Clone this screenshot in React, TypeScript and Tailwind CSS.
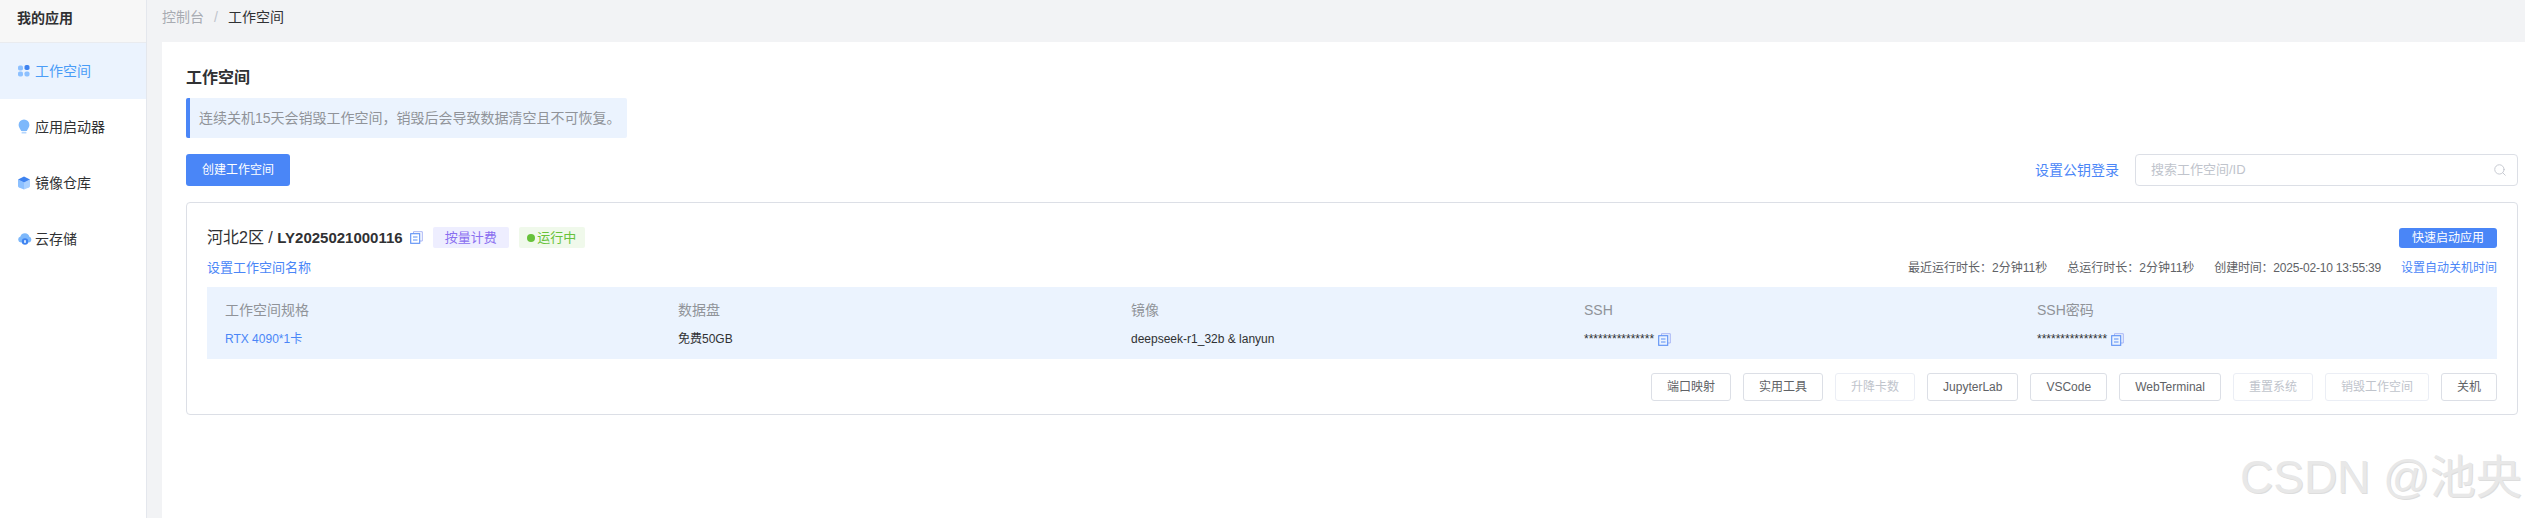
import React from 'react';
import { Search } from 'lucide-react';

const AppsIcon = () => (
  <svg width="14" height="14" viewBox="0 0 14 14" className="shrink-0">
    <rect x="1" y="1.5" width="5" height="5" rx="1.8" fill="#8cc0ff" />
    <rect x="7.5" y="1" width="5" height="5" rx="1.8" fill="#3f83f0" />
    <rect x="1" y="7.5" width="5" height="5" rx="1.8" fill="#8cc0ff" />
    <rect x="7.5" y="7.5" width="5" height="5" rx="1.8" fill="#8cc0ff" />
  </svg>
);

const BulbIcon = () => (
  <svg width="14" height="16" viewBox="0 0 14 16" className="shrink-0">
    <path d="M7 0.5a5.4 5.4 0 0 1 5.4 5.4c0 2.4-1.6 3.6-2.6 6.1H4.2C3.200 9.500 1.600 8.300 1.600 5.900A5.400 5.400 0 0 1 7 0.500z" fill="#7db8fb" />
    <rect x="4.500" y="12.800" width="5" height="1.800" rx="0.900" fill="#b5d6fd" />
  </svg>
);

const BoxIcon = () => (
  <svg width="14" height="14" viewBox="0 0 14 14" className="shrink-0">
    <path d="M1 3.500L7 6.500V13.500L2 11.500Q1 11 1 10z" fill="#8cc0ff" />
    <path d="M13 3.500L7 6.500V13.500L12 11.500Q13 11 13 10z" fill="#a9d0ff" />
    <path d="M7 0.500L13 3.500L7 6.500L1 3.500z" fill="#3f83f0" />
  </svg>
);

const CloudIcon = () => (
  <svg width="16" height="14" viewBox="0 0 16 14" className="shrink-0">
    <path d="M4 10.500a3 3 0 0 1-0.600-5.900A4.700 4.700 0 0 1 12.400 4.800A3 3 0 0 1 12.200 10.500z" fill="#7db8fb" />
    <circle cx="8" cy="9.500" r="3.200" fill="#3f83f0" />
    <rect x="7" y="8" width="2" height="3" rx="0.800" fill="#cfe4ff" />
  </svg>
);

const CopyIcon = () => (
  <svg width="13" height="13" viewBox="0 0 13 13" fill="none" className="shrink-0">
    <path d="M3.500 2.500V0.700H12.300V10H10" stroke="#a9b6f5" strokeWidth="1" />
    <rect x="0.700" y="2.700" width="9" height="9.600" stroke="#5b8ff5" strokeWidth="1.100" />
    <path d="M3 6H7.500M3 9H7.500" stroke="#5b8ff5" strokeWidth="1" />
  </svg>
);

const menus = [
  { label: '工作空间', icon: <AppsIcon />, active: true },
  { label: '应用启动器', icon: <BulbIcon />, active: false },
  { label: '镜像仓库', icon: <BoxIcon />, active: false },
  { label: '云存储', icon: <CloudIcon />, active: false },
];

const actions = [
  { label: '端口映射' },
  { label: '实用工具' },
  { label: '升降卡数', disabled: true },
  { label: 'JupyterLab' },
  { label: 'VSCode' },
  { label: 'WebTerminal' },
  { label: '重置系统', disabled: true },
  { label: '销毁工作空间', disabled: true },
  { label: '关机' },
];

const Sidebar = () => (
  <aside className="w-[147px] shrink-0 bg-white border-r border-[#e4e7ed]">
    <div className="h-[43px] pl-[17px] pb-[6px] flex items-center bg-[#f7f7f7] border-b border-[#e9ebef] text-[14px] font-bold text-[#303133]">
      我的应用
    </div>
    {menus.map(m => (
      <div
        key={m.label}
        className={`h-[56px] flex items-center text-[14px] ${m.active ? 'bg-[#ebf3fe] text-[#4a9cf7]' : 'text-[#303133]'}`}
      >
        <span className="w-[35px] pl-[17px] flex justify-start">{m.icon}</span>
        {m.label}
      </div>
    ))}
  </aside>
);

const Info = ({ label, children }: { label: string; children: React.ReactNode }) => (
  <div>
    <div className="text-[14px] leading-[20px] text-[#909399]">{label}</div>
    <div className="mt-[9px] h-[20px] flex items-center text-[12px] text-[#303133]">{children}</div>
  </div>
);

const App = () => {
  return (
    <div className="relative flex h-[518px] w-[2525px] overflow-hidden bg-[#f2f3f5] font-['Liberation_Sans','Noto_Sans_CJK_SC',sans-serif]">
      <Sidebar />

      <main className="flex-1 pl-[15px] flex flex-col">
        {/* Breadcrumb */}
        <div className="h-[42px] pb-[8px] flex items-center text-[14px]">
          <span className="text-[#a8abb2]">控制台</span>
          <span className="mx-[10px] text-[#c0c4cc]">/</span>
          <span className="text-[#303133]">工作空间</span>
        </div>

        <div className="flex-1 bg-white pt-[26px] pl-[24px] pr-[7px]">
          <h2 className="text-[16px] leading-[20px] font-bold text-[#303133]">工作空间</h2>

          <div className="mt-[10px] w-[441px] h-[40px] flex items-center pl-[9px] border-l-[4px] border-[#4a86f7] rounded-[2px] bg-[#ebf3fe] text-[14px] text-[#909399]">
            连续关机15天会销毁工作空间，销毁后会导致数据清空且不可恢复。
          </div>

          <div className="mt-[16px] flex items-center justify-between">
            <button className="h-[32px] px-[16px] rounded-[3px] bg-[#4a86f7] text-white text-[12px]">创建工作空间</button>
            <div className="flex items-center gap-[16px]">
              <span className="text-[14px] text-[#4a86f7]">设置公钥登录</span>
              <div className="w-[383px] h-[32px] flex items-center justify-between pl-[15px] pr-[10px] border border-[#dcdfe6] rounded-[4px] text-[13px] text-[#c0c4cc]">
                搜索工作空间/ID
                <Search size={14} strokeWidth={1.500} />
              </div>
            </div>
          </div>

          {/* Workspace card */}
          <section className="mt-[16px] h-[213px] border border-[#dcdfe6] rounded-[4px] px-[20px] pt-[23px]">
            <div className="h-[23px] flex items-center justify-between">
              <div className="flex items-center">
                <span className="text-[16px] text-[#303133]">
                  河北2区 / <span className="text-[15px] font-semibold">LY2025021000116</span>
                </span>
                <span className="ml-[7px]"><CopyIcon /></span>
                <span className="ml-[10px] h-[21px] w-[76px] flex items-center justify-center rounded-[2px] bg-[#eeeeff] text-[13px] text-[#8a6ff0]">按量计费</span>
                <span className="ml-[10px] h-[21px] w-[66px] flex items-center justify-center gap-[2px] rounded-[2px] bg-[#f0f9eb] text-[13px] text-[#67c23a]">
                  <span className="w-[8px] h-[8px] rounded-full bg-[#67c23a]" />
                  运行中
                </span>
              </div>
              <button className="h-[20px] w-[98px] rounded-[3px] bg-[#4a86f7] text-white text-[12px]">快速启动应用</button>
            </div>

            <div className="mt-[9px] h-[20px] flex items-center justify-between text-[12px]">
              <span className="text-[13px] text-[#4a86f7]">设置工作空间名称</span>
              <div className="flex items-center gap-[20px] text-[#606266]">
                <span>最近运行时长：2分钟11秒</span>
                <span>总运行时长：2分钟11秒</span>
                <span className="tracking-[-0.2px]">创建时间：2025-02-10 13:55:39</span>
                <span className="text-[#4a86f7]">设置自动关机时间</span>
              </div>
            </div>

            <div className="mt-[9px] h-[72px] pt-[13px] pl-[18px] grid grid-cols-[repeat(5,453px)] bg-[#ebf3fe]">
              <Info label="工作空间规格"><span className="text-[#4a86f7]">RTX 4090*1卡</span></Info>
              <Info label="数据盘">免费50GB</Info>
              <Info label="镜像">deepseek-r1_32b &amp; lanyun</Info>
              <Info label="SSH">
                <span>***************</span>
                <span className="ml-[4px]"><CopyIcon /></span>
              </Info>
              <Info label="SSH密码">
                <span>***************</span>
                <span className="ml-[4px]"><CopyIcon /></span>
              </Info>
            </div>

            <div className="mt-[14px] flex justify-end gap-[12px]">
              {actions.map(a => (
                <button
                  key={a.label}
                  className={`h-[28px] px-[15px] rounded-[3px] border text-[12px] ${a.disabled ? 'border-[#ebeef5] text-[#c0c4cc]' : 'border-[#dcdfe6] text-[#606266]'}`}
                >
                  {a.label}
                </button>
              ))}
            </div>
          </section>
        </div>
      </main>

      {/* Watermark */}
      <div className="absolute left-[2240px] top-[447px] text-[46px] leading-[60px] whitespace-nowrap text-[#e8e8e8] [text-shadow:1px_1px_0_#dddddd]">
        CSDN @池央
      </div>
    </div>
  );
};

export default App;
